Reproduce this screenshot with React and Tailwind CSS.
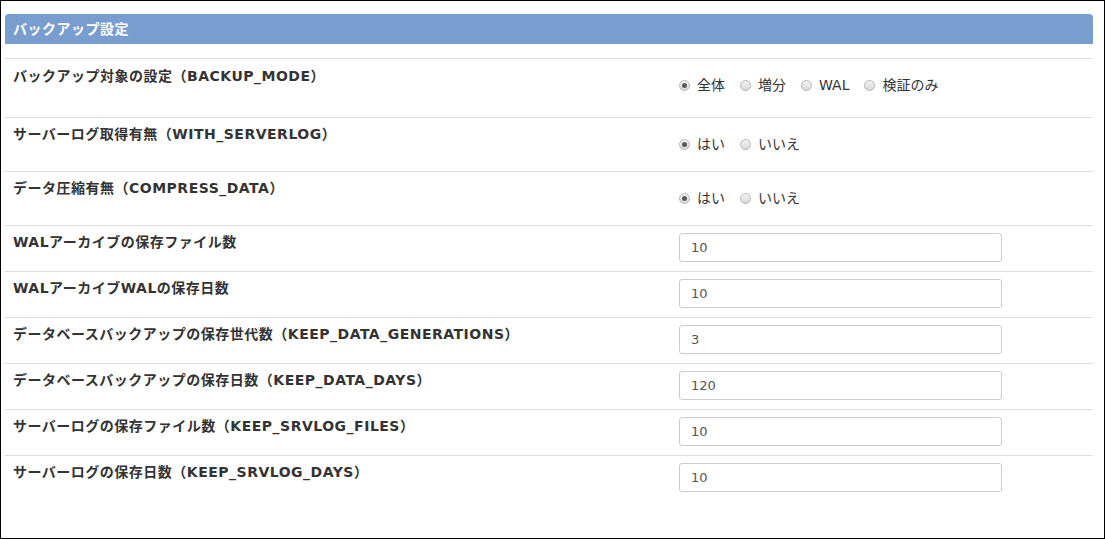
const FONT = "font-['DejaVu_Sans','Noto_Sans_CJK_JP',sans-serif]";

const RADIO_ROWS = [
  {
    label: "バックアップ対象の設定（BACKUP_MODE）",
    options: ["全体", "増分", "WAL", "検証のみ"],
    height: "h-[59px]",
    labelPad: "pt-[7px]",
  },
  {
    label: "サーバーログ取得有無（WITH_SERVERLOG）",
    options: ["はい", "いいえ"],
    height: "h-[54px]",
    labelPad: "pt-[6px]",
  },
  {
    label: "データ圧縮有無（COMPRESS_DATA）",
    options: ["はい", "いいえ"],
    height: "h-[54px]",
    labelPad: "pt-[6px]",
  },
];

const INPUT_ROWS = [
  { label: "WALアーカイブの保存ファイル数", value: "10" },
  { label: "WALアーカイブWALの保存日数", value: "10" },
  { label: "データベースバックアップの保存世代数（KEEP_DATA_GENERATIONS）", value: "3" },
  { label: "データベースバックアップの保存日数（KEEP_DATA_DAYS）", value: "120" },
  { label: "サーバーログの保存ファイル数（KEEP_SRVLOG_FILES）", value: "10" },
  { label: "サーバーログの保存日数（KEEP_SRVLOG_DAYS）", value: "10" },
];

function Radio({ checked }) {
  return (
    <span className="flex h-[11px] w-[11px] items-center justify-center rounded-full border border-[#b5b5b5] bg-gradient-to-b from-[#f4f4f4] to-[#d9d9d9]">
      {checked && <span className="h-[5px] w-[5px] rounded-full bg-[#5a5a5a]" />}
    </span>
  );
}

export default function App() {
  return (
    <div className={`h-[539px] w-[1105px] border border-black bg-white pl-[4px] pt-[13px] text-[#333] ${FONT}`}>
      <div className="w-[1088px]">
        {/* Header */}
        <div className="flex h-[30px] items-center rounded-t-[4px] bg-[#7a9dcf] px-[8px] text-[14px] font-bold tracking-[0.5px] text-white">
          バックアップ設定
        </div>

        <div className="mt-[14px]">
          {RADIO_ROWS.map((row) => (
            <div key={row.label} className={`flex border-t border-[#dddddd] ${row.height}`}>
              <div className={`w-[674px] pl-[8px] text-[14px] font-bold leading-[20px] tracking-[0.5px] ${row.labelPad}`}>
                {row.label}
              </div>
              <div className="mt-[16px] flex h-[20px] items-center">
                {row.options.map((opt, i) => (
                  <label key={opt} className="mr-[15px] flex items-center gap-[7px] text-[14px] leading-[20px]">
                    <Radio checked={i === 0} />
                    {opt}
                  </label>
                ))}
              </div>
            </div>
          ))}

          {INPUT_ROWS.map((row) => (
            <div key={row.label} className="flex h-[46px] border-t border-[#dddddd]">
              <div className="w-[674px] pl-[8px] pt-[6px] text-[14px] font-bold leading-[20px] tracking-[0.5px]">
                {row.label}
              </div>
              <div className="pt-[7px]">
                <input
                  type="text"
                  defaultValue={row.value}
                  className="h-[29px] w-[323px] rounded-[3px] border border-[#cccccc] px-[11px] text-[13px] text-[#555] outline-none"
                />
              </div>
            </div>
          ))}
        </div>
      </div>
    </div>
  );
}
